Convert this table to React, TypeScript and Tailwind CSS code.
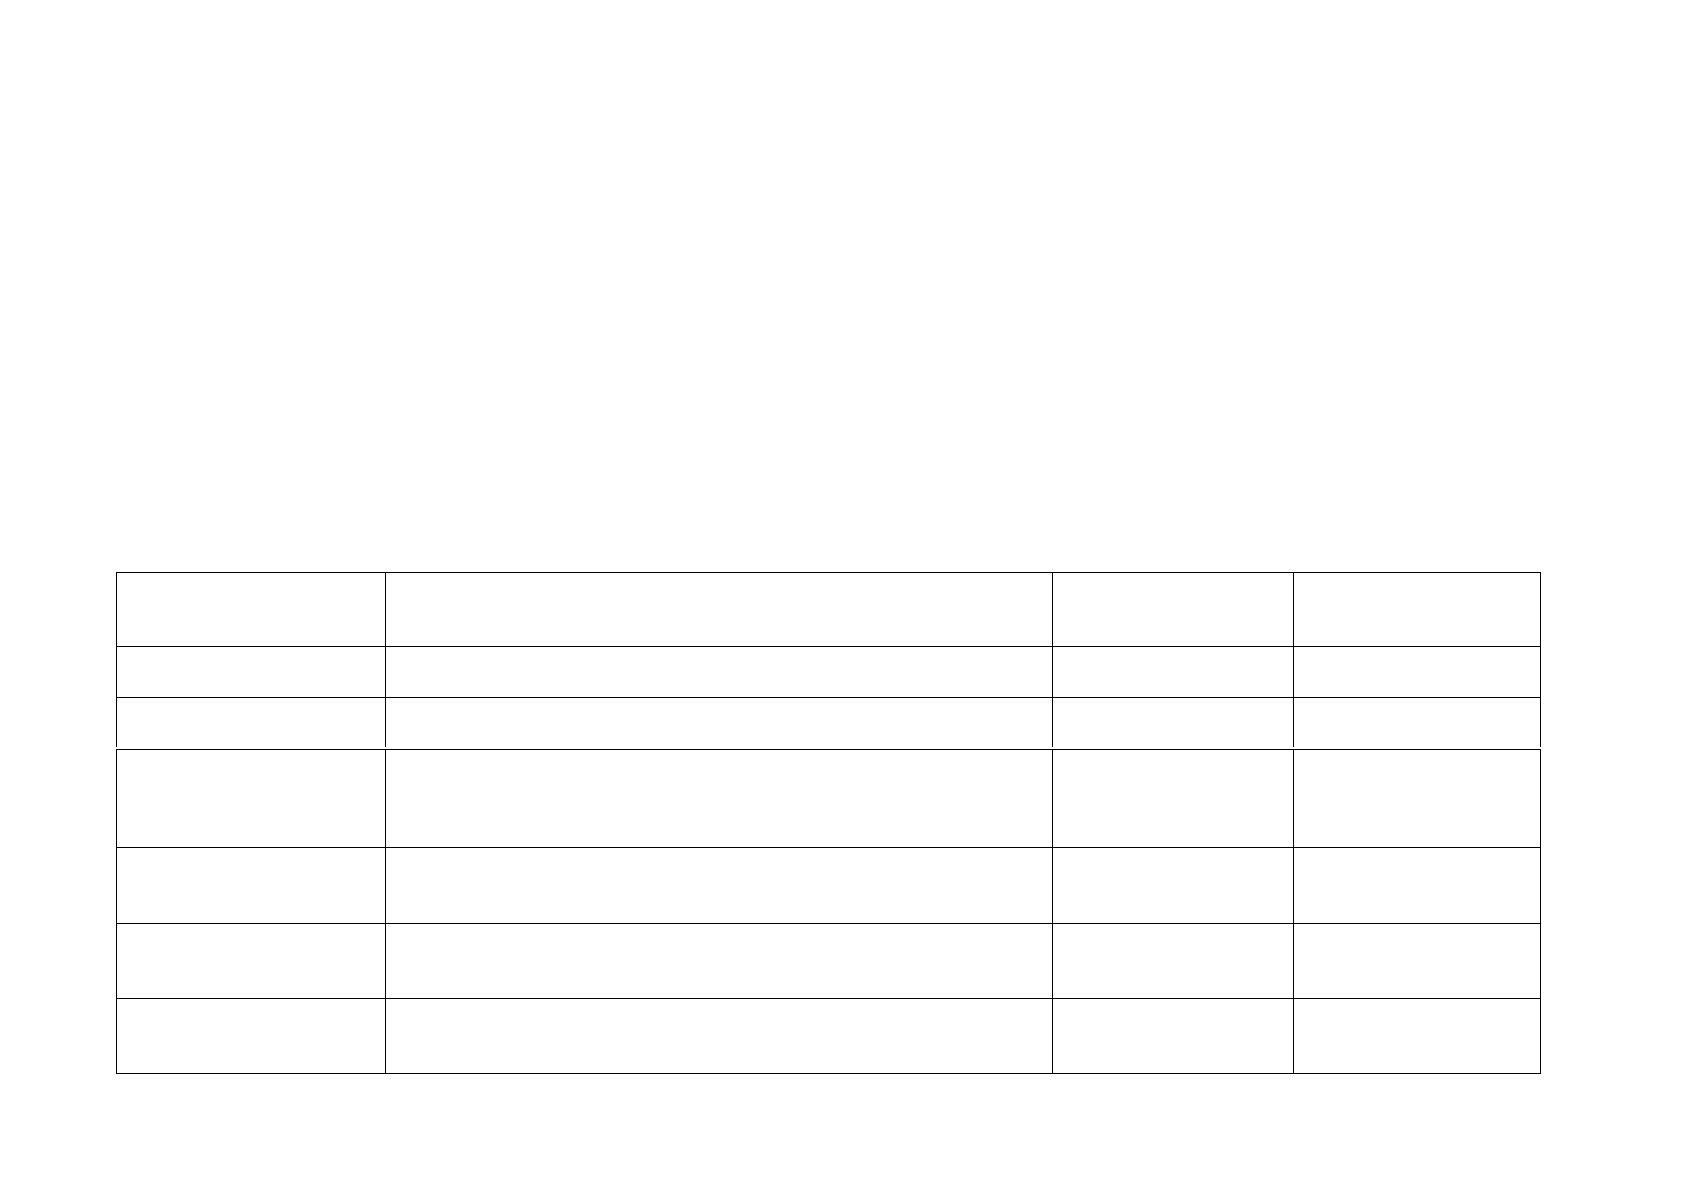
import React from "react";

const cols = "grid grid-cols-[269px_667px_241px_247px]";

function Row({ h, last }: { h: string; last?: boolean }) {
  return (
    <div className={`${cols} ${h} ${last ? "" : "border-b"} border-black box-border`}>
      <div className="border-r border-black" />
      <div className="border-r border-black" />
      <div className="border-r border-black" />
      <div className="border-r border-black" />
    </div>
  );
}

export default function App() {
  return (
    <div className="w-[1684px] h-[1191px] bg-white pl-[116px] pt-[572px] font-['Liberation_Sans',sans-serif]">
      <div className="w-[1425px] border-l border-t border-black">
        <Row h="h-[74px]" />
        <Row h="h-[51px]" />
        <Row h="h-[49px]" last />
      </div>
      <div className="mt-[2px] w-[1425px] border-l border-t border-black">
        <Row h="h-[98px]" />
        <Row h="h-[76px]" />
        <Row h="h-[75px]" />
        <Row h="h-[75px]" />
      </div>
    </div>
  );
}
